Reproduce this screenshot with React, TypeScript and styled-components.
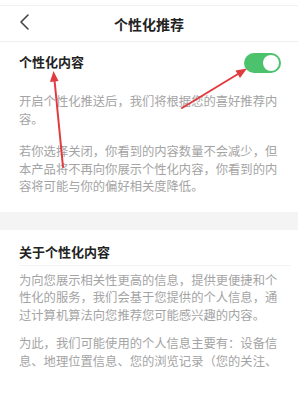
import React from "react";
import styled, { createGlobalStyle } from "styled-components";

const Global = createGlobalStyle`
  html, body { margin: 0; padding: 0; background: #ffffff; }
  body {
    font-family: "Noto Sans CJK SC", "Noto Sans", sans-serif;
    overflow: hidden;
  }
`;

const Page = styled.div`
  position: relative;
  width: 298px;
  height: 401px;
  overflow: hidden;
  background: #fff;
`;

const TopEdge = styled.div`
  height: 5px;
  border-bottom: 1px solid #f1f1f1;
`;

const Header = styled.header`
  position: relative;
  height: 35px;
  display: flex;
  align-items: center;
  justify-content: center;
  border-bottom: 1px solid #efefef;
`;

const BackButton = styled.div`
  position: absolute;
  left: 18px;
  top: 5px;
  width: 14px;
  height: 22px;
  display: flex;
  align-items: center;
`;

const Title = styled.h1`
  margin: 0;
  font-size: 14px;
  font-weight: 700;
  color: #222;
  line-height: 20px;
`;

const SettingRow = styled.div`
  height: 40px;
  padding: 0 17px 0 19px;
  display: flex;
  align-items: center;
  justify-content: space-between;
`;

const RowLabel = styled.span`
  font-size: 13px;
  font-weight: 700;
  color: #222;
  line-height: 18px;
`;

const Toggle = styled.div<{ $on: boolean }>`
  position: relative;
  width: 37px;
  height: 20px;
  border-radius: 10px;
  background: ${(p) => (p.$on ? "#4cc26c" : "#ddd")};
  margin-top: 1px;
`;

const Knob = styled.div<{ $on: boolean }>`
  position: absolute;
  top: 2px;
  ${(p) => (p.$on ? "right: 2px;" : "left: 2px;")}
  width: 16px;
  height: 16px;
  border-radius: 50%;
  background: #fff;
`;

const Body = styled.div<{ $top: number; $bottom: number }>`
  padding: ${(p) => p.$top}px 19px ${(p) => p.$bottom}px 19px;
  display: flex;
  flex-direction: column;
`;

const Para = styled.p<{ $gap?: number }>`
  margin: ${(p) => p.$gap ?? 0}px 0 0 0;
  font-size: 12.3px;
  line-height: 17.5px;
  color: #a4a4a4;
  width: 260px;
`;

const Band = styled.div`
  height: 18px;
  background: #f4f4f4;
`;

const SectionTitle = styled.div`
  margin: 0 7px 0 19px;
  padding: 13px 0 4px 0;
  font-size: 13px;
  font-weight: 700;
  color: #222;
  line-height: 18px;
  border-bottom: 1px solid #f3f3f3;
`;

const Overlay = styled.svg`
  position: absolute;
  left: 0;
  top: 0;
  pointer-events: none;
`;

export default function App() {
  return (
    <Page>
      <Global />
      <TopEdge />
      <Header>
        <BackButton>
          <svg width="14" height="22" viewBox="0 0 14 22">
            <polyline
              points="10,4 3,11 10,18"
              fill="none"
              stroke="#444"
              strokeWidth="1.6"
              strokeLinecap="round"
              strokeLinejoin="round"
            />
          </svg>
        </BackButton>
        <Title>个性化推荐</Title>
      </Header>
      <SettingRow>
        <RowLabel>个性化内容</RowLabel>
        <Toggle $on>
          <Knob $on />
        </Toggle>
      </SettingRow>
      <Body $top={11} $bottom={16}>
        <Para>开启个性化推送后，我们将根据您的喜好推荐内容。</Para>
        <Para $gap={15}>
          若你选择关闭，你看到的内容数量不会减少，但本产品将不再向你展示个性化内容，你看到的内容将可能与你的偏好相关度降低。
        </Para>
      </Body>
      <Band />
      <SectionTitle>关于个性化内容</SectionTitle>
      <Body $top={6} $bottom={0}>
        <Para>
          为向您展示相关性更高的信息，提供更便捷和个性化的服务，我们会基于您提供的个人信息，通过计算机算法向您推荐您可能感兴趣的内容。
        </Para>
        <Para $gap={11}>
          为此，我们可能使用的个人信息主要有：设备信息、地理位置信息、您的浏览记录（您的关注、
        </Para>
      </Body>
      <Overlay width="298" height="401" viewBox="0 0 298 401">
        <line x1="63" y1="167" x2="54.5" y2="80" stroke="#e23b3f" strokeWidth="2" strokeLinecap="round" />
        <polygon points="53.5,71 50,82 58.5,81" fill="#e23b3f" />
        <line x1="182" y1="108" x2="238" y2="74" stroke="#e23b3f" strokeWidth="2" strokeLinecap="round" />
        <polygon points="247,68.5 235.5,70.5 240,78" fill="#e23b3f" />
      </Overlay>
    </Page>
  );
}
